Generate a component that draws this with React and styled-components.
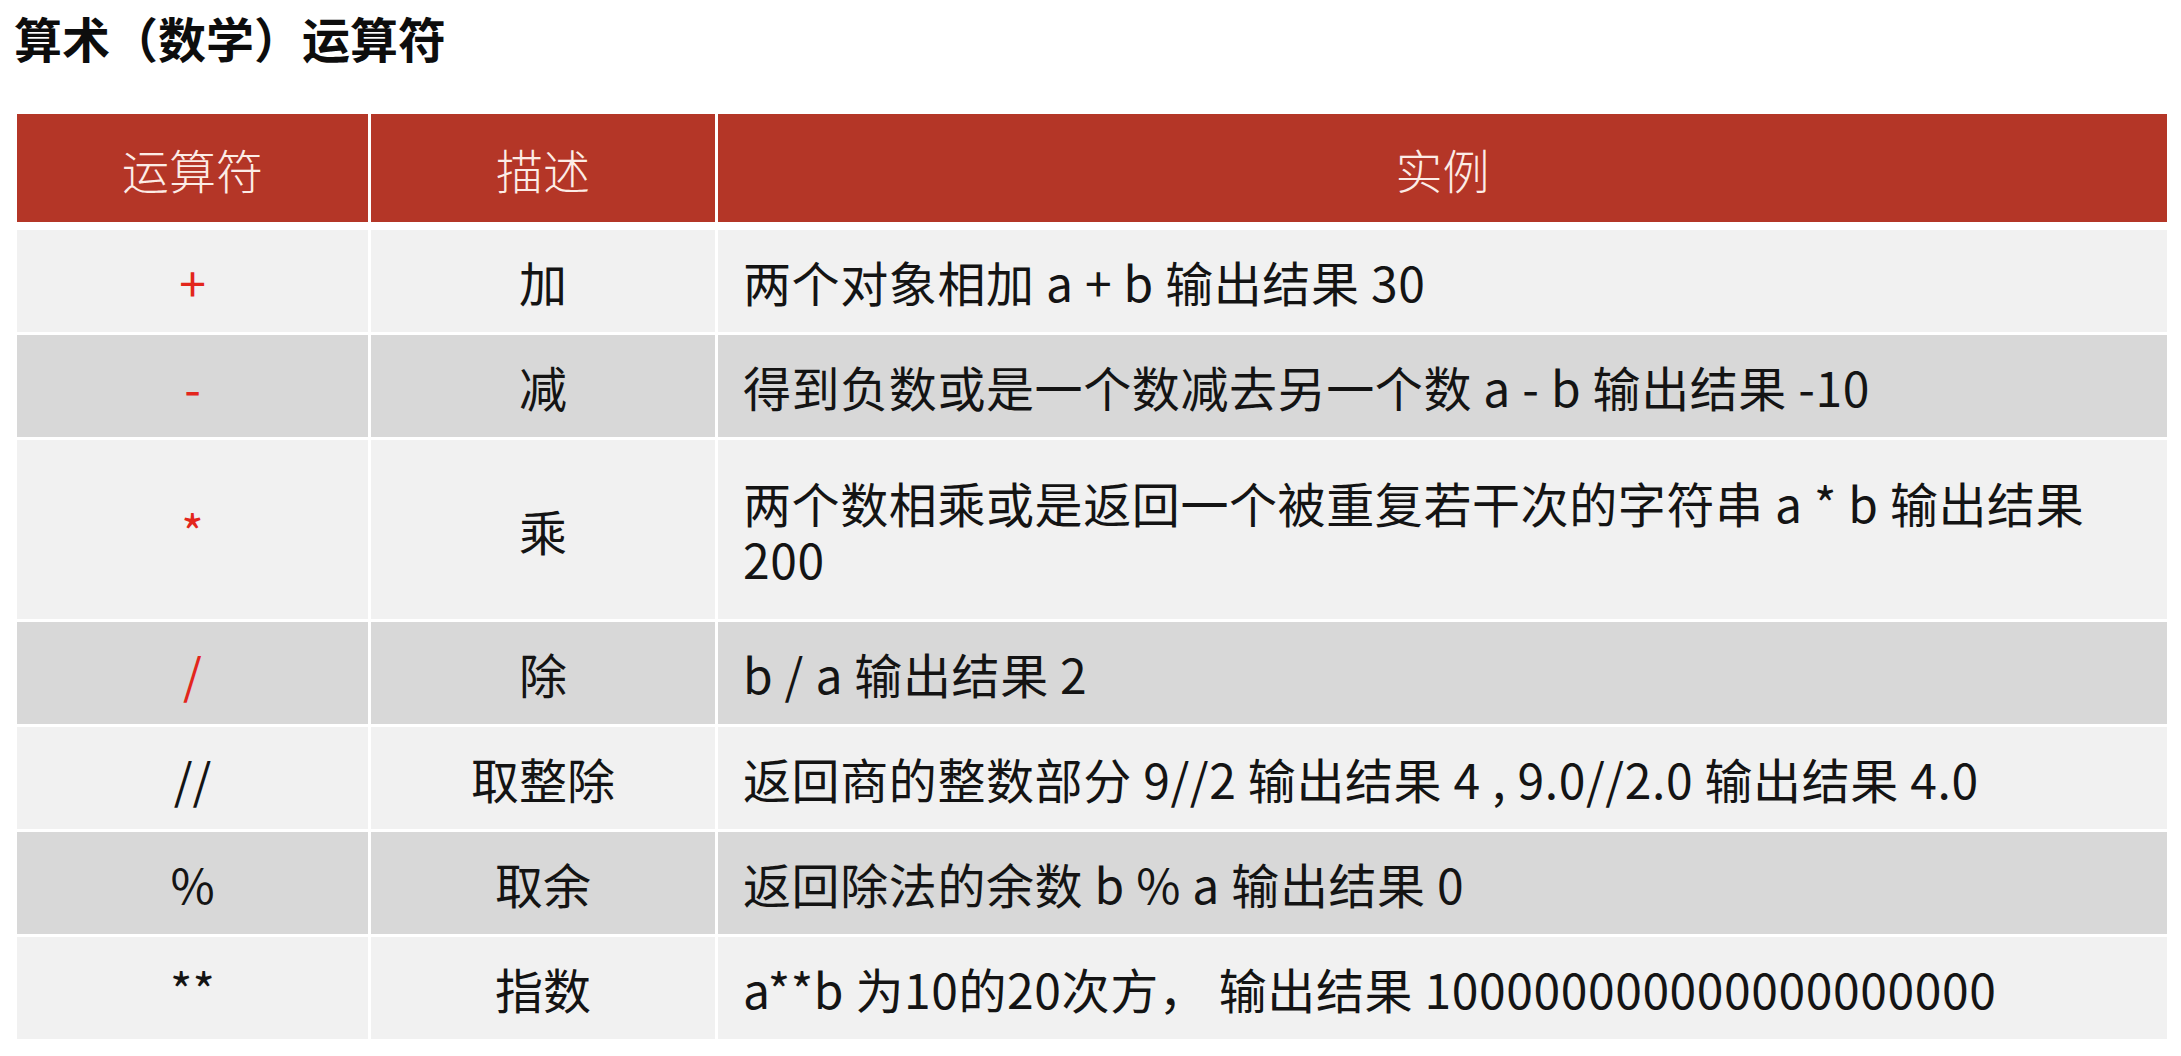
import styled, { createGlobalStyle } from "styled-components";

const GlobalStyle = createGlobalStyle`
  body {
    margin: 0;
    background: #ffffff;
    font-family: "Noto Sans CJK SC", "Noto Sans", sans-serif;
    color: #111111;
  }
`;

const Page = styled.div`
  width: 2181px;
  height: 1056px;
  overflow: hidden;
`;

const Title = styled.h1`
  margin: 0;
  padding: 9px 0 0 14px;
  height: 114px;
  box-sizing: border-box;
  font-size: 48px;
  line-height: 57px;
  font-weight: 700;
  color: #0d0d0d;
`;

const Table = styled.div`
  display: flex;
  flex-direction: column;
  gap: 3px;
  width: 2150px;
  margin-left: 17px;
`;

const HeaderRow = styled.div`
  display: grid;
  grid-template-columns: 351px 344px 1fr;
  column-gap: 3px;
  height: 108px;
  margin-bottom: 5px;
`;

const HeaderCell = styled.div`
  display: flex;
  align-items: center;
  justify-content: center;
  background: #b43627;
  color: #fcece6;
  font-size: 47px;
  font-weight: 300;
`;

const Row = styled.div`
  display: grid;
  grid-template-columns: 351px 344px 1fr;
  column-gap: 3px;
  min-height: ${(p) => (p.$tall ? 179 : 102)}px;
`;

const Cell = styled.div`
  display: flex;
  align-items: center;
  justify-content: ${(p) => (p.$left ? "flex-start" : "center")};
  padding: ${(p) => (p.$left ? "12px 60px 12px 25px" : "12px")};
  box-sizing: border-box;
  background: ${(p) => (p.$shade ? "#d8d8d8" : "#f1f1f1")};
  font-size: 48px;
  line-height: 56px;
  letter-spacing: ${(p) => (p.$left ? "0.6px" : "0")};
  color: ${(p) => (p.$red ? "#e3261c" : "#141414")};
`;

const rows = [
  { op: "+", red: true, name: "加", text: "两个对象相加 a + b 输出结果 30" },
  { op: "-", red: true, name: "减", text: "得到负数或是一个数减去另一个数 a - b 输出结果 -10" },
  {
    op: "*",
    red: true,
    name: "乘",
    text: "两个数相乘或是返回一个被重复若干次的字符串 a * b 输出结果 200",
    tall: true,
  },
  { op: "/", red: true, name: "除", text: "b / a 输出结果 2" },
  { op: "//", name: "取整除", text: "返回商的整数部分 9//2 输出结果 4 , 9.0//2.0 输出结果 4.0" },
  { op: "%", name: "取余", text: "返回除法的余数 b % a 输出结果 0" },
  { op: "**", name: "指数", text: "a**b 为10的20次方， 输出结果 100000000000000000000" },
];

export default function App() {
  return (
    <Page>
      <GlobalStyle />
      <Title>算术（数学）运算符</Title>
      <Table>
        <HeaderRow>
          <HeaderCell>运算符</HeaderCell>
          <HeaderCell>描述</HeaderCell>
          <HeaderCell>实例</HeaderCell>
        </HeaderRow>
        {rows.map((r, i) => {
          const shade = i % 2 === 1;
          return (
            <Row key={r.op} $tall={r.tall}>
              <Cell $shade={shade} $red={r.red}>{r.op}</Cell>
              <Cell $shade={shade}>{r.name}</Cell>
              <Cell $shade={shade} $left>{r.text}</Cell>
            </Row>
          );
        })}
      </Table>
    </Page>
  );
}
